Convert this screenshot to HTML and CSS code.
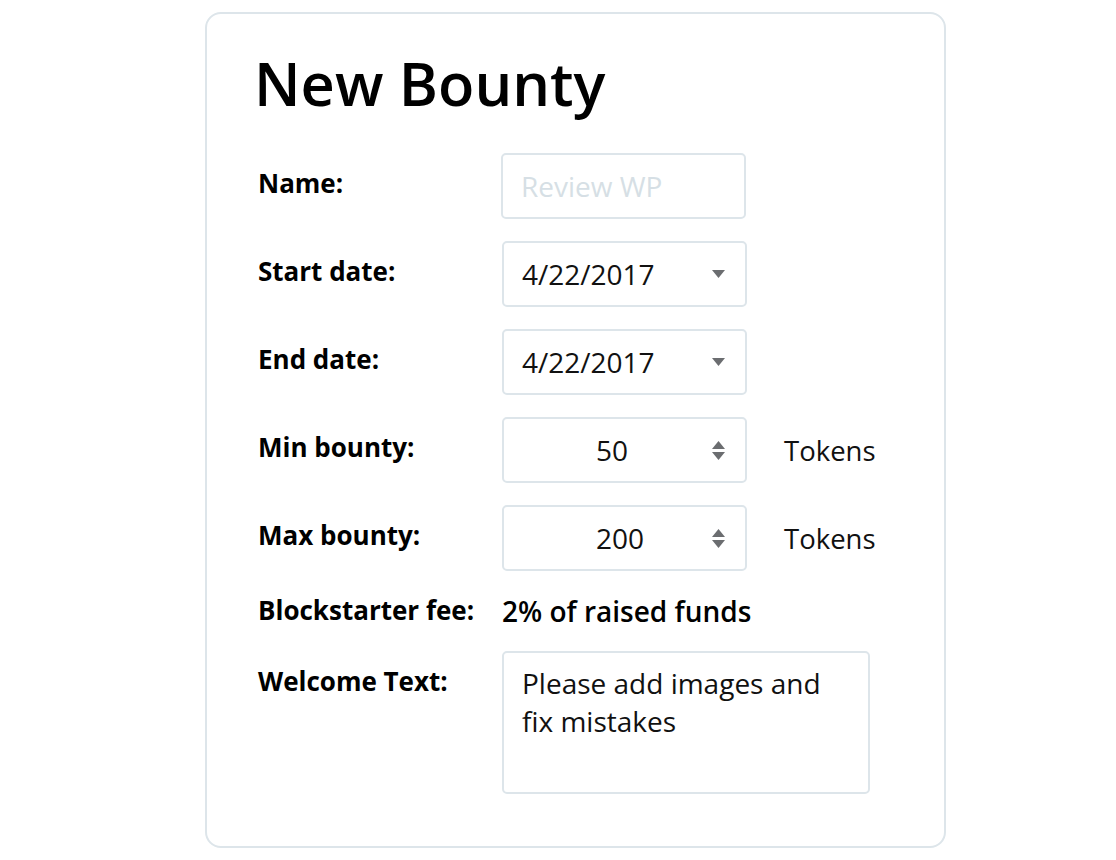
FILE: index.html
```html
<!DOCTYPE html>
<html lang="en">
<head>
<meta charset="utf-8">
<title>New Bounty</title>
<link rel="stylesheet" href="styles.css">
</head>
<body>
<div class="card">
  <h1 class="title">New Bounty</h1>
  <form class="form">
    <label class="label" for="name">Name:</label>
    <div class="cell"><input id="name" class="input" type="text" placeholder="Review WP"></div>

    <div class="label">Start date:</div>
    <div class="cell">
      <div class="input select"><span>4/22/2017</span>
        <svg class="caret" width="13" height="8" viewBox="0 0 13 8"><path d="M0 0H13L6.5 8Z" fill="#6b6d70"/></svg>
      </div>
    </div>

    <div class="label">End date:</div>
    <div class="cell">
      <div class="input select"><span>4/22/2017</span>
        <svg class="caret" width="13" height="8" viewBox="0 0 13 8"><path d="M0 0H13L6.5 8Z" fill="#6b6d70"/></svg>
      </div>
    </div>

    <div class="label">Min bounty:</div>
    <div class="cell with-unit">
      <div class="input number"><span class="num">50</span>
        <svg class="spin" width="13" height="19" viewBox="0 0 13 19"><path d="M6.5 0L13 8H0Z M0 11H13L6.5 19Z" fill="#6b6d70"/></svg>
      </div>
      <span class="unit">Tokens</span>
    </div>

    <div class="label">Max bounty:</div>
    <div class="cell with-unit">
      <div class="input number"><span class="num">200</span>
        <svg class="spin" width="13" height="19" viewBox="0 0 13 19"><path d="M6.5 0L13 8H0Z M0 11H13L6.5 19Z" fill="#6b6d70"/></svg>
      </div>
      <span class="unit">Tokens</span>
    </div>

    <div class="label fee-label">Blockstarter fee:</div>
    <div class="cell fee">2% of raised funds</div>

    <div class="label">Welcome Text:</div>
    <div class="cell"><div class="textarea">Please add images and fix mistakes</div></div>
  </form>
</div>
</body>
</html>
```

FILE: styles.css
```css
* { box-sizing: border-box; }
html, body { margin: 0; padding: 0; background: #fff; }
body {
  font-family: "Open Sans", "Noto Sans", sans-serif;
  color: #111;
}
.card {
  margin: 12px 0 0 205px;
  width: 741px;
  height: 836px;
  border: 2px solid #dde5ea;
  border-radius: 16px;
  padding: 29px 0 0 47px;
}
.title {
  margin: 0;
  font-size: 59.5px;
  font-weight: 600;
  line-height: 80px;
  color: #000;
}
.form {
  margin-top: 30px;
  display: grid;
  grid-template-columns: 244px auto;
  row-gap: 22px;
  padding-left: 4px;
}
.label {
  font-size: 26px;
  font-weight: 700;
  line-height: 34px;
  padding-top: 13px;
  color: #000;
}
.cell { display: flex; align-items: center; }
.input {
  width: 245px;
  height: 66px;
  border: 2px solid #dde5ea;
  border-radius: 5px;
  font-family: inherit;
  font-size: 28px;
  color: #111;
  padding: 0 18px;
  outline: none;
  background: #fff;
}
.input::placeholder { color: #d6dfe5; }
#name { margin-left: -1px; }
.select {
  display: flex;
  align-items: center;
  justify-content: space-between;
  padding-right: 20px;
}
.number {
  display: flex;
  align-items: center;
  padding-left: 92px;
  padding-right: 20px;
}
.number .num { flex: 1; }
.unit {
  margin-left: 37px;
  font-size: 27.5px;
}
.fee-label { padding-top: 0; }
.fee {
  font-size: 28px;
  font-weight: 600;
  line-height: 36px;
  color: #000;
}
.textarea {
  width: 368px;
  height: 143px;
  border: 2px solid #dde5ea;
  border-radius: 5px;
  font-size: 28px;
  line-height: 38px;
  padding: 11px 30px 0 18px;
}
```
